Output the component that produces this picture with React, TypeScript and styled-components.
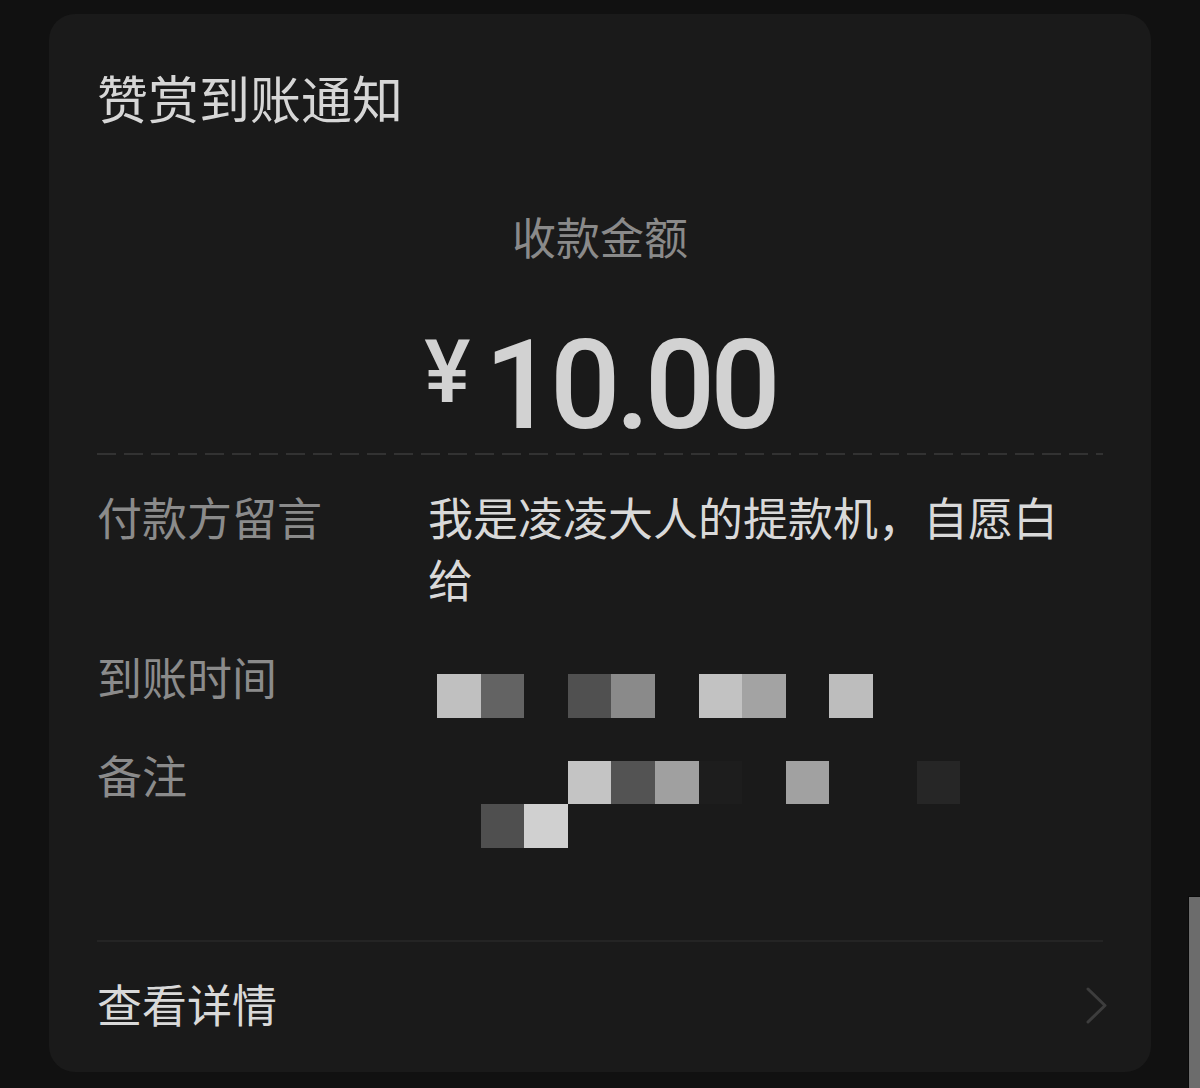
import React from "react";
import styled, { createGlobalStyle } from "styled-components";

const GlobalStyle = createGlobalStyle`
  html, body {
    margin: 0;
    height: 1088px;
    background: #111111;
    overflow: hidden;
  }
  body {
    font-family: "Noto Sans CJK SC", "Noto Sans", sans-serif;
  }
`;

type Cell = { col: number; row: number; color: string };

const timeCells: Cell[] = [
  { col: 1, row: 1, color: "#c0c0c0" },
  { col: 2, row: 1, color: "#636363" },
  { col: 4, row: 1, color: "#505050" },
  { col: 5, row: 1, color: "#8a8a8a" },
  { col: 7, row: 1, color: "#c2c2c2" },
  { col: 8, row: 1, color: "#a3a3a3" },
  { col: 10, row: 1, color: "#bdbdbd" },
];

const remarkCells: Cell[] = [
  { col: 4, row: 1, color: "#c4c4c4" },
  { col: 5, row: 1, color: "#535353" },
  { col: 6, row: 1, color: "#a0a0a0" },
  { col: 7, row: 1, color: "#1d1d1d" },
  { col: 9, row: 1, color: "#a1a1a1" },
  { col: 12, row: 1, color: "#262626" },
  { col: 2, row: 2, color: "#4f4f4f" },
  { col: 3, row: 2, color: "#d0d0d0" },
];

const Mosaic = ({ cells, offset }: { cells: Cell[]; offset: number }) => (
  <MosaicGrid $offset={offset}>
    {cells.map((c, i) => (
      <MosaicCell
        key={i}
        style={{ gridColumn: c.col, gridRow: c.row, background: c.color }}
      />
    ))}
  </MosaicGrid>
);

const App = () => {
  return (
    <>
      <GlobalStyle />
      <Card>
        <Title>赞赏到账通知</Title>
        <AmountLabel>收款金额</AmountLabel>
        <Amount>
          <Currency>¥</Currency>
          <Digits>10.00</Digits>
        </Amount>
        <Dashed />
        <Details>
          <Row $after={36}>
            <Label>付款方留言</Label>
            <Value>我是凌凌大人的提款机，自愿白给</Value>
          </Row>
          <Row $after={26}>
            <Label>到账时间</Label>
            <Value>
              <Mosaic cells={timeCells} offset={28} />
            </Value>
          </Row>
          <Row $after={0}>
            <Label>备注</Label>
            <Value>
              <Mosaic cells={remarkCells} offset={17} />
            </Value>
          </Row>
        </Details>
        <Footer>
          <FooterText>查看详情</FooterText>
          <Chevron width="24" height="40" viewBox="0 0 24 40">
            <path
              d="M3 3 L20 19.5 L3 36"
              fill="none"
              stroke="#3d3d3d"
              strokeWidth="3"
              strokeLinecap="round"
              strokeLinejoin="round"
            />
          </Chevron>
        </Footer>
      </Card>
      <ScrollThumb />
    </>
  );
};

const Card = styled.div`
  box-sizing: border-box;
  width: 1102px;
  height: 1058px;
  margin: 14px 0 0 49px;
  padding: 58px 48px 0;
  background: #1a1a1a;
  border-radius: 26px;
  display: flex;
  flex-direction: column;
`;

const Title = styled.div`
  font-size: 51px;
  line-height: 50px;
  color: #d6d6d6;
`;

const AmountLabel = styled.div`
  margin-top: 92px;
  font-size: 44px;
  line-height: 44px;
  text-align: center;
  color: #8a8a8a;
`;

const Amount = styled.div`
  margin-top: 66px;
  display: flex;
  justify-content: center;
  align-items: flex-start;
  font-family: Roboto, "Liberation Sans", sans-serif;
  font-weight: 500;
  color: #d2d2d2;
`;

const Currency = styled.span`
  font-size: 87px;
  line-height: 87px;
  margin-top: 5px;
  margin-right: 14px;
`;

const Digits = styled.span`
  font-size: 124px;
  line-height: 124px;
  letter-spacing: -5px;
`;

const Dashed = styled.div`
  margin-top: 5px;
  height: 2px;
  background-image: linear-gradient(to right, #323232 19px, transparent 19px);
  background-size: 27px 2px;
  background-repeat: repeat-x;
`;

const Details = styled.div`
  margin-top: 31px;
  display: flex;
  flex-direction: column;
`;

const Row = styled.div<{ $after: number }>`
  display: flex;
  align-items: flex-start;
  margin-bottom: ${(p) => p.$after}px;
`;

const Label = styled.div`
  flex: 0 0 331px;
  font-size: 45px;
  line-height: 62px;
  color: #8b8b8b;
`;

const Value = styled.div`
  flex: 1;
  max-width: 660px;
  font-size: 45px;
  line-height: 62px;
  color: #d9d9d9;
`;

const MosaicGrid = styled.div<{ $offset: number }>`
  display: grid;
  grid-template-columns: repeat(12, 43.6px);
  grid-auto-rows: 43.6px;
  margin: ${(p) => p.$offset}px 0 0 9px;
`;

const MosaicCell = styled.div`
  width: 100%;
  height: 100%;
`;

const Footer = styled.div`
  margin-top: 92px;
  border-top: 2px solid #242424;
  padding-top: 31px;
  display: flex;
  align-items: center;
  justify-content: space-between;
`;

const FooterText = styled.div`
  font-size: 45px;
  line-height: 62px;
  color: #d9d9d9;
`;

const Chevron = styled.svg`
  margin-right: -6px;
  margin-top: 4px;
`;

const ScrollThumb = styled.div`
  position: fixed;
  right: 0;
  bottom: 0;
  width: 11px;
  height: 191px;
  background: #6c6c6c;
  border-left: 1px solid #0a0a0a;
  border-top: 1px solid #0a0a0a;
`;

export default App;
